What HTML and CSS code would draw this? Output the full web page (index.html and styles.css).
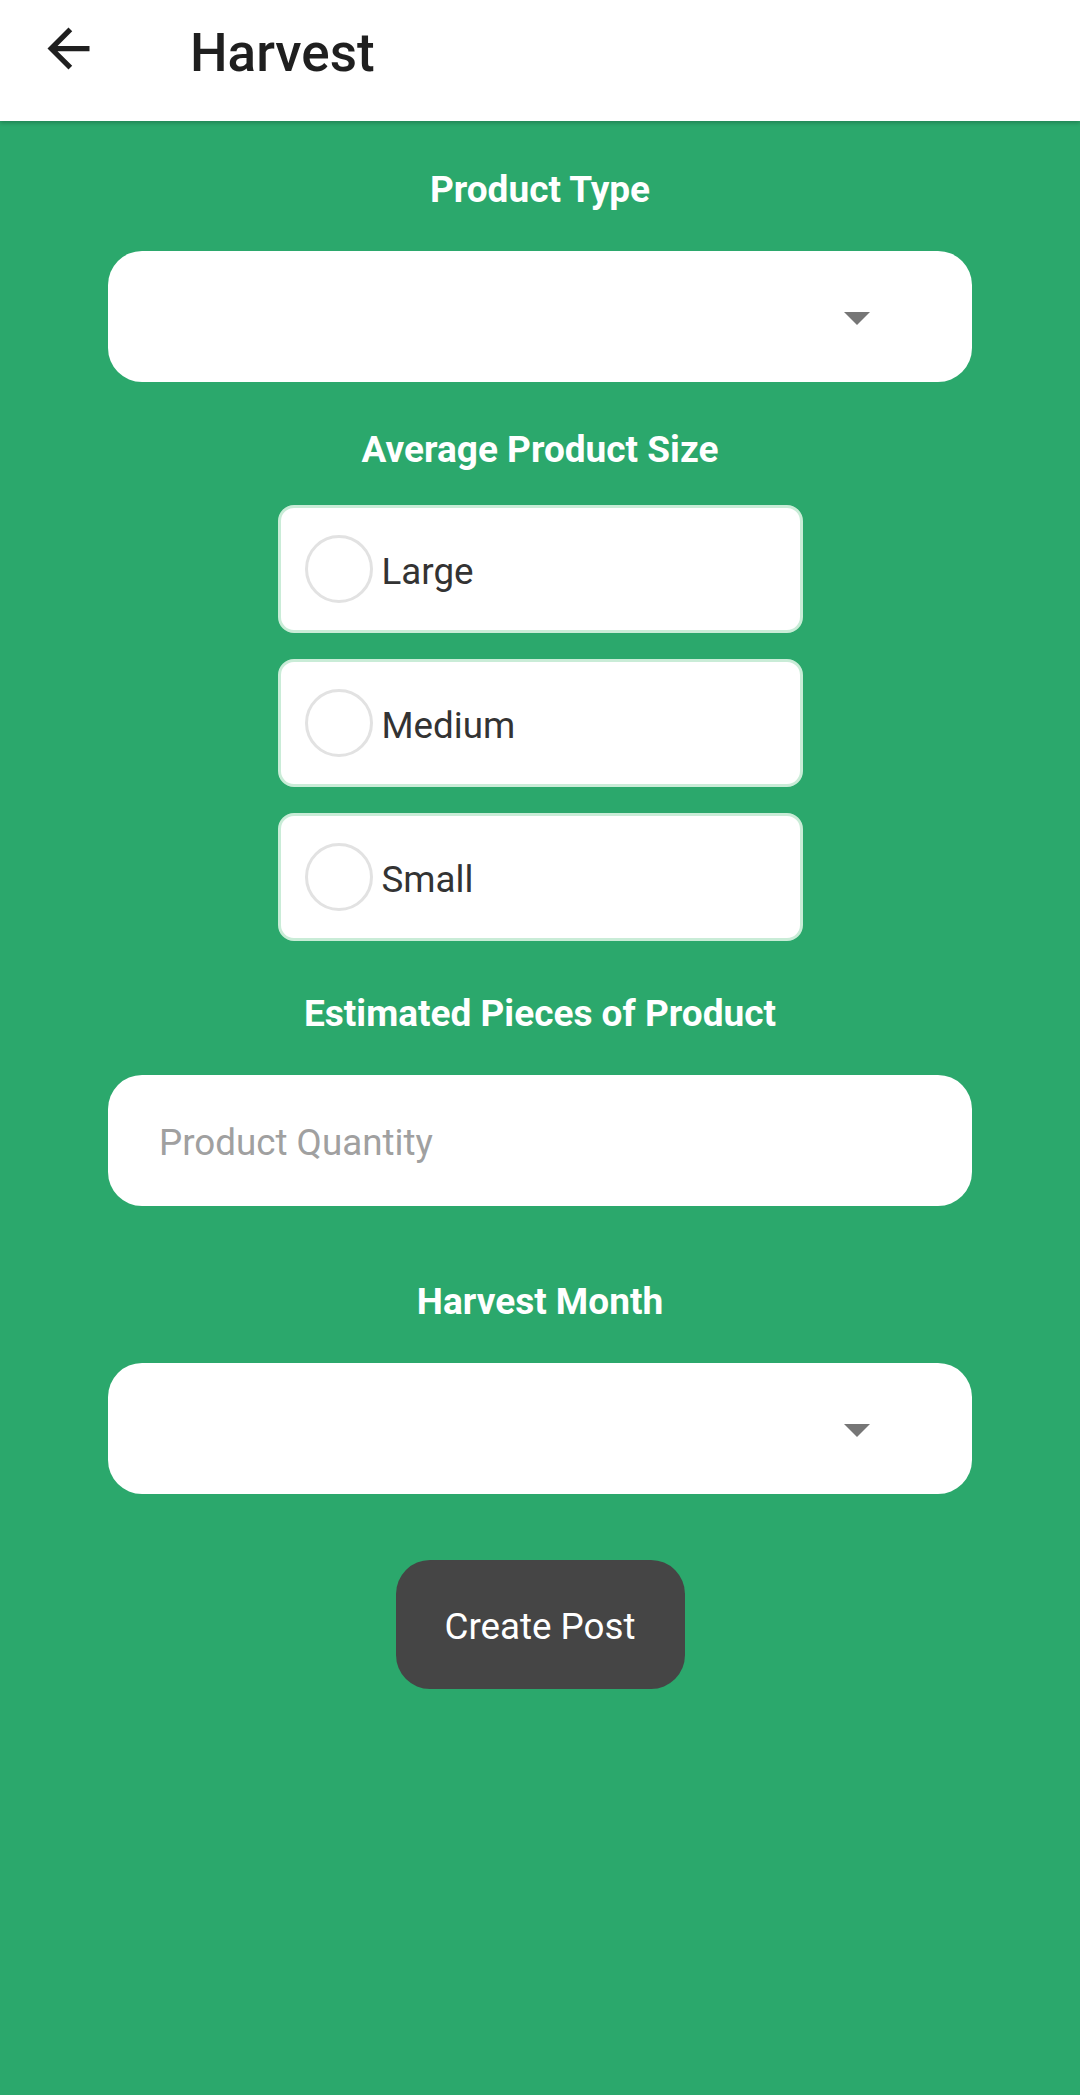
FILE: index.html
```html
<!DOCTYPE html>
<html>
<head>
<meta charset="utf-8">
<link rel="stylesheet" href="styles.css">
</head>
<body>
<header class="appbar">
  <svg class="back" viewBox="0 0 24 24" width="63" height="63"><path d="M20 11H7.83l5.59-5.59L12 4l-8 8 8 8 1.41-1.41L7.83 13H20v-2z" fill="#1f1f1f"/></svg>
  <h1 class="title">Harvest</h1>
</header>
<main class="content">
  <div class="label label-first">Product Type</div>
  <div class="select"><span class="caret"></span></div>

  <div class="label label-size">Average Product Size</div>
  <div class="options">
    <div class="option"><span class="radio"></span><span class="opt-text">Large</span></div>
    <div class="option"><span class="radio"></span><span class="opt-text">Medium</span></div>
    <div class="option"><span class="radio"></span><span class="opt-text">Small</span></div>
  </div>

  <div class="label label-pieces">Estimated Pieces of Product</div>
  <div class="input"><span class="placeholder">Product Quantity</span></div>

  <div class="label label-month">Harvest Month</div>
  <div class="select"><span class="caret"></span></div>

  <button class="btn"><span class="btn-text">Create Post</span></button>
</main>
</body>
</html>
```

FILE: styles.css
```css
* { box-sizing: border-box; }
html, body {
  margin: 0;
  padding: 0;
  height: 100%;
}
body {
  background: #2ba86c;
  font-family: Roboto, "Liberation Sans", sans-serif;
  width: 1080px;
  min-height: 2095px;
}
.appbar {
  position: relative;
  z-index: 1;
  height: 121px;
  background: #ffffff;
  display: flex;
  align-items: flex-start;
  box-shadow: 0 2px 4px rgba(0,0,0,0.22);
}
.back {
  display: block;
  margin-left: 37px;
  margin-top: 17px;
  flex: none;
}
.title {
  margin: 22px 0 0 90px;
  font-size: 53px;
  font-weight: 500;
  line-height: normal;
  color: #1f1f1f;
}
.content {
  display: flex;
  flex-direction: column;
  align-items: center;
}
.label {
  color: #ffffff;
  font-weight: 700;
  font-size: 37px;
  line-height: 43px;
  padding-top: 2px;
  text-align: center;
}
.label-first { margin-top: 45px; }
.label-size { margin-top: 44px; }
.label-pieces { margin-top: 49px; }
.label-month { margin-top: 72px; }
.select, .input {
  width: 864px;
  height: 131px;
  background: #ffffff;
  border-radius: 34px;
  margin-top: 40px;
}
.select {
  display: flex;
  justify-content: flex-end;
  align-items: center;
  padding-right: 102px;
}
.caret {
  width: 0;
  height: 0;
  border-left: 13px solid transparent;
  border-right: 13px solid transparent;
  border-top: 13px solid #767676;
  margin-top: 4px;
}
.input {
  display: flex;
  align-items: center;
  padding-left: 51px;
}
.placeholder {
  font-size: 36.75px;
  color: #a0a0a0;
  padding-top: 4px;
}
.options {
  margin-top: 34px;
  display: flex;
  flex-direction: column;
  gap: 26px;
}
.option {
  width: 525px;
  height: 128px;
  background: #ffffff;
  border: 3px solid #c9ecd7;
  border-radius: 16px;
  display: flex;
  align-items: center;
  padding-left: 24px;
}
.radio {
  width: 68px;
  height: 68px;
  border-radius: 50%;
  border: 3px solid #e2e2e2;
  flex: none;
}
.opt-text {
  margin-left: 9px;
  font-size: 36.75px;
  color: #333333;
  padding-top: 4px;
}
.btn {
  margin-top: 66px;
  width: 289px;
  height: 129px;
  border: none;
  border-radius: 34px;
  background: #454545;
  color: #ffffff;
  font-family: Roboto, "Liberation Sans", sans-serif;
  font-size: 36.75px;
  font-weight: 400;
  padding: 0;
}
.btn-text {
  display: inline-block;
  padding-top: 4px;
}
```
